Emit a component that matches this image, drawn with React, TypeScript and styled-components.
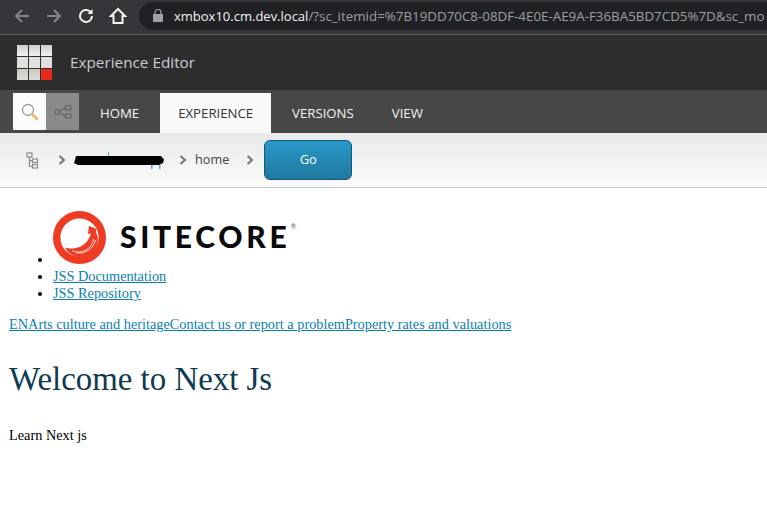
import React from "react";
import styled, { createGlobalStyle } from "styled-components";

const Global = createGlobalStyle`
  html, body { margin: 0; padding: 0; background: #fff; }
  body { width: 767px; height: 512px; overflow: hidden; font-family: "Liberation Serif", serif; }
`;
const ui = `"Open Sans", "Liberation Sans", sans-serif`;

const BrowserBar = styled.div`
  height: 32px; padding: 0 0 2px 13px; background: #35363a; border-bottom: 1px solid #5f6063;
  display: flex; align-items: center; overflow: hidden;
`;
const NavIcon = styled.svg<{ $on?: boolean }>`
  width: 18px; height: 18px; margin-right: 14px; flex: none; fill: none;
  stroke: ${p => (p.$on ? "#f1f3f4" : "#85878a")}; stroke-width: 2;
`;
const Omnibox = styled.div`
  flex: 1; min-width: 0; height: 28px; margin-left: -2px; border-radius: 14px 0 0 14px; background: #202124;
  display: flex; align-items: center; padding-left: 14px; overflow: hidden;
  font: 13px ${ui}; color: #9aa0a6; white-space: nowrap;
`;
const Lock = styled.svg` width: 10px; height: 13px; flex: none; margin-top: -1px; `;
const Host = styled.span` color: #f1f3f4; margin-left: 11px; `;
const UrlPath = styled.span` font-size: 13.35px; `;
const EditorHeader = styled.div`
  height: 55px; background: #2d2d2d; display: flex; align-items: center; padding-left: 17px;
`;
const Grid = styled.div`
  display: grid; grid-template-columns: repeat(3, 11px); grid-auto-rows: 11px; gap: 1px;
  margin-right: 17px;
`;
const Tile = styled.div<{ $red?: boolean; $row: number }>`
  background: ${p => p.$red ? "#e6291f" : p.$row === 2 ? "linear-gradient(#c9c9c2,#dcdcd6)" : p.$row === 1 ? "#dfe1e1" : "linear-gradient(#cfcfcf,#f0f0f0)"};
`;
const Title = styled.div` font: 15.3px ${ui}; color: #c9ccd0; margin: -2px 0 0 1px; `;
const TabBar = styled.div`
  height: 43px; background: #474747; display: flex; align-items: flex-end; padding-left: 13px;
`;
const ToolBtn = styled.div<{ $light?: boolean }>`
  width: 33px; height: 37px; margin-bottom: 3px; align-self: flex-end;
  background: ${p => p.$light ? "#fcfcfc" : "#8a8a8a"}; display: flex; align-items: center; justify-content: center;
`;
const Tab = styled.div<{ $active?: boolean }>`
  height: 40px; display: flex; align-items: center; font: 13.2px ${ui};
  padding: 0 ${p => p.$active ? 18 : 19}px 1px;
  margin: 0 ${p => p.$active ? 2 : 0}px;
  box-sizing: border-box;
  background: ${p => p.$active ? "#f9f9f9" : "transparent"};
  color: ${p => p.$active ? "#333" : "#f4f4f4"};
`;
const Tabs = styled.div` display: flex; margin-left: 2px; `;
const Crumbs = styled.div`
  height: 54px; border-bottom: 1px solid #cfcfcf; background: linear-gradient(#e9e9e9, #fbfbfb);
  display: flex; align-items: center; padding-left: 26px;
`;
const Chevron = styled.svg<{ $first?: boolean }>`
  width: 8px; height: 10px; fill: none; stroke: #6f7479; stroke-width: 2; flex: none;
  margin-left: ${p => (p.$first ? 19 : 0)}px;
`;
const Redacted = styled.svg` width: 92px; height: 18px; margin: 0 14px 0 7px; flex: none; `;
const Crumb = styled.span` font: 12.7px ${ui}; color: #444; margin: -2px 17px 0 8px; `;
const GoButton = styled.button`
  width: 88px; height: 40px; border: 1px solid #14597a; border-radius: 6px; margin-left: 10px; padding: 0 0 2px;
  background: linear-gradient(#2a98c9, #1f789f); color: #fff; font: 13px ${ui};
`;
const Page = styled.div` padding: 9px 9px 8px; font-size: 14.3px; `;
const List = styled.ul` margin: 14px 0; padding-left: 44px; line-height: 17px; `;
const Logo = styled.span` display: inline-flex; align-items: center; gap: 13px; `;
const LogoMark = styled.svg` width: 53px; height: 53px; flex: none; `;
const LogoText = styled.span`
  font: 900 30px Lato, "Open Sans", sans-serif; letter-spacing: 3.7px; color: #0a0a0a; position: relative; margin: -4px 0 0 1px;
`;
const Reg = styled.span` font-size: 7px; letter-spacing: 0; position: absolute; top: 3px; right: -6px; color: #555; line-height: 10px; font-weight: 400; `;
const A = styled.a` color: #0b7fb3; text-decoration: underline; `;
const Heading = styled.h1`
  font: 400 32.9px "Liberation Serif", serif; color: #0e3a52; margin: 27px 0 0; line-height: 38px;
`;
const Para = styled.p` margin: 29px 0 0; `;

const chevron = <path d="M1.500 1 6 5l-4.500 4" />;

export default function App() {
  return (
    <>
      <Global />
      <BrowserBar>
        <NavIcon $on={false} viewBox="0 0 18 18"><path d="M16 9H3M9 3 3 9l6 6" /></NavIcon>
        <NavIcon $on={false} viewBox="0 0 18 18"><path d="M2 9h13M9 3l6 6-6 6" /></NavIcon>
        <NavIcon $on viewBox="0 0 18 18"><path d="M15 9a6 6 0 1 1-2-4.500L15 6.500" /><path d="M15.500 2v5h-5z" fill="#f1f3f4" stroke="none" /></NavIcon>
        <NavIcon $on viewBox="0 0 18 18"><path d="M9 2 2 9h2.500v7h9V9H16z" /></NavIcon>
        <Omnibox>
          <Lock viewBox="0 0 10 13"><path d="M.5 5.500h9V13h-9z M2 5.500V3.500a3 3 0 0 1 6 0v2" fill="none" stroke="#9aa0a6" strokeWidth="1.200" /><path d="M.5 5.500h9V13h-9z" fill="#9aa0a6" /></Lock>
          <Host>xmbox10.cm.dev.local</Host><UrlPath>/?sc_itemid=%7B19DD70C8-08DF-4E0E-AE9A-F36BA5BD7CD5%7D&amp;sc_mo</UrlPath>
        </Omnibox>
      </BrowserBar>
      <EditorHeader>
        <Grid>
          {[0, 1, 2].flatMap(r => [0, 1, 2].map(c => <Tile key={`${r}${c}`} $row={r} $red={r === 2 && c === 2} />))}
        </Grid>
        <Title>Experience Editor</Title>
      </EditorHeader>
      <TabBar>
        <ToolBtn $light>
          <svg width="18" height="18" viewBox="0 0 18 18" fill="none">
            <circle cx="7" cy="7" r="5.500" stroke="#999" strokeWidth="1.300" />
            <path d="M11 11l5 5" stroke="#f0b56c" strokeWidth="2.500" strokeLinecap="round" />
          </svg>
        </ToolBtn>
        <ToolBtn>
          <svg width="18" height="14" viewBox="0 0 18 14" fill="none" stroke="#666" strokeWidth="1.200">
            <circle cx="3" cy="7" r="2.500" /><path d="M5.500 6 11 3M5.500 8l5.500 3" />
            <rect x="11.500" y="0.800" width="5.500" height="4" /><rect x="11.500" y="9" width="5.500" height="4" />
          </svg>
        </ToolBtn>
        <Tabs>
          <Tab>HOME</Tab>
          <Tab $active>EXPERIENCE</Tab>
          <Tab>VERSIONS</Tab>
          <Tab>VIEW</Tab>
        </Tabs>
      </TabBar>
      <Crumbs>
        <svg width="13" height="17" viewBox="0 0 13 17" fill="none" stroke="#8a8a8a" strokeWidth="1.200">
          <rect x="1" y="1" width="5" height="4" /><rect x="6.500" y="7" width="5" height="3.500" /><rect x="6.500" y="12.500" width="5" height="3.500" />
          <path d="M3.500 5v9.500h3M3.500 8.700h3" />
        </svg>
        <Chevron $first viewBox="0 0 8 10">{chevron}</Chevron>
        <Redacted viewBox="0 0 92 18">
          <path d="M35 1h1v4h-1zM78 14h1.500v4H78zM86 14h1.500v4H86z" fill="#59a9c8" />
          <path d="M3 5h85l3 3.500-1 3.500-4 2H5L1 12l1-3z" fill="#000" />
        </Redacted>
        <Chevron viewBox="0 0 8 10">{chevron}</Chevron>
        <Crumb>home</Crumb>
        <Chevron viewBox="0 0 8 10">{chevron}</Chevron>
        <GoButton>Go</GoButton>
      </Crumbs>
      <Page>
        <List>
          <li>
            <Logo>
              <LogoMark viewBox="0 0 53 53">
                <circle cx="26.500" cy="26.500" r="22.800" fill="#fff" stroke="#ef3a24" strokeWidth="7.400" />
                <path d="M43 21A17 17 0 0 1 12 36.500 A20 20 0 0 0 38 22.500L35 23 36 15 43.500 18z" fill="#ef3a24" />
                <path d="M40.500 28A15 15 0 0 1 19 39.500M42.500 29A17 17 0 0 1 23 42" fill="none" stroke="#fff" strokeWidth="0.800" />
              </LogoMark>
              <LogoText>SITECORE<Reg>®</Reg></LogoText>
            </Logo>
          </li>
          <li><A href="#">JSS Documentation</A></li>
          <li><A href="#">JSS Repository</A></li>
        </List>
        <div>
          <A href="#">EN</A><A href="#">Arts culture and heritage</A><A href="#">Contact us or report a problem</A><A href="#">Property rates and valuations</A>
        </div>
        <Heading>Welcome to Next Js</Heading>
        <Para>Learn Next js</Para>
      </Page>
    </>
  );
}
